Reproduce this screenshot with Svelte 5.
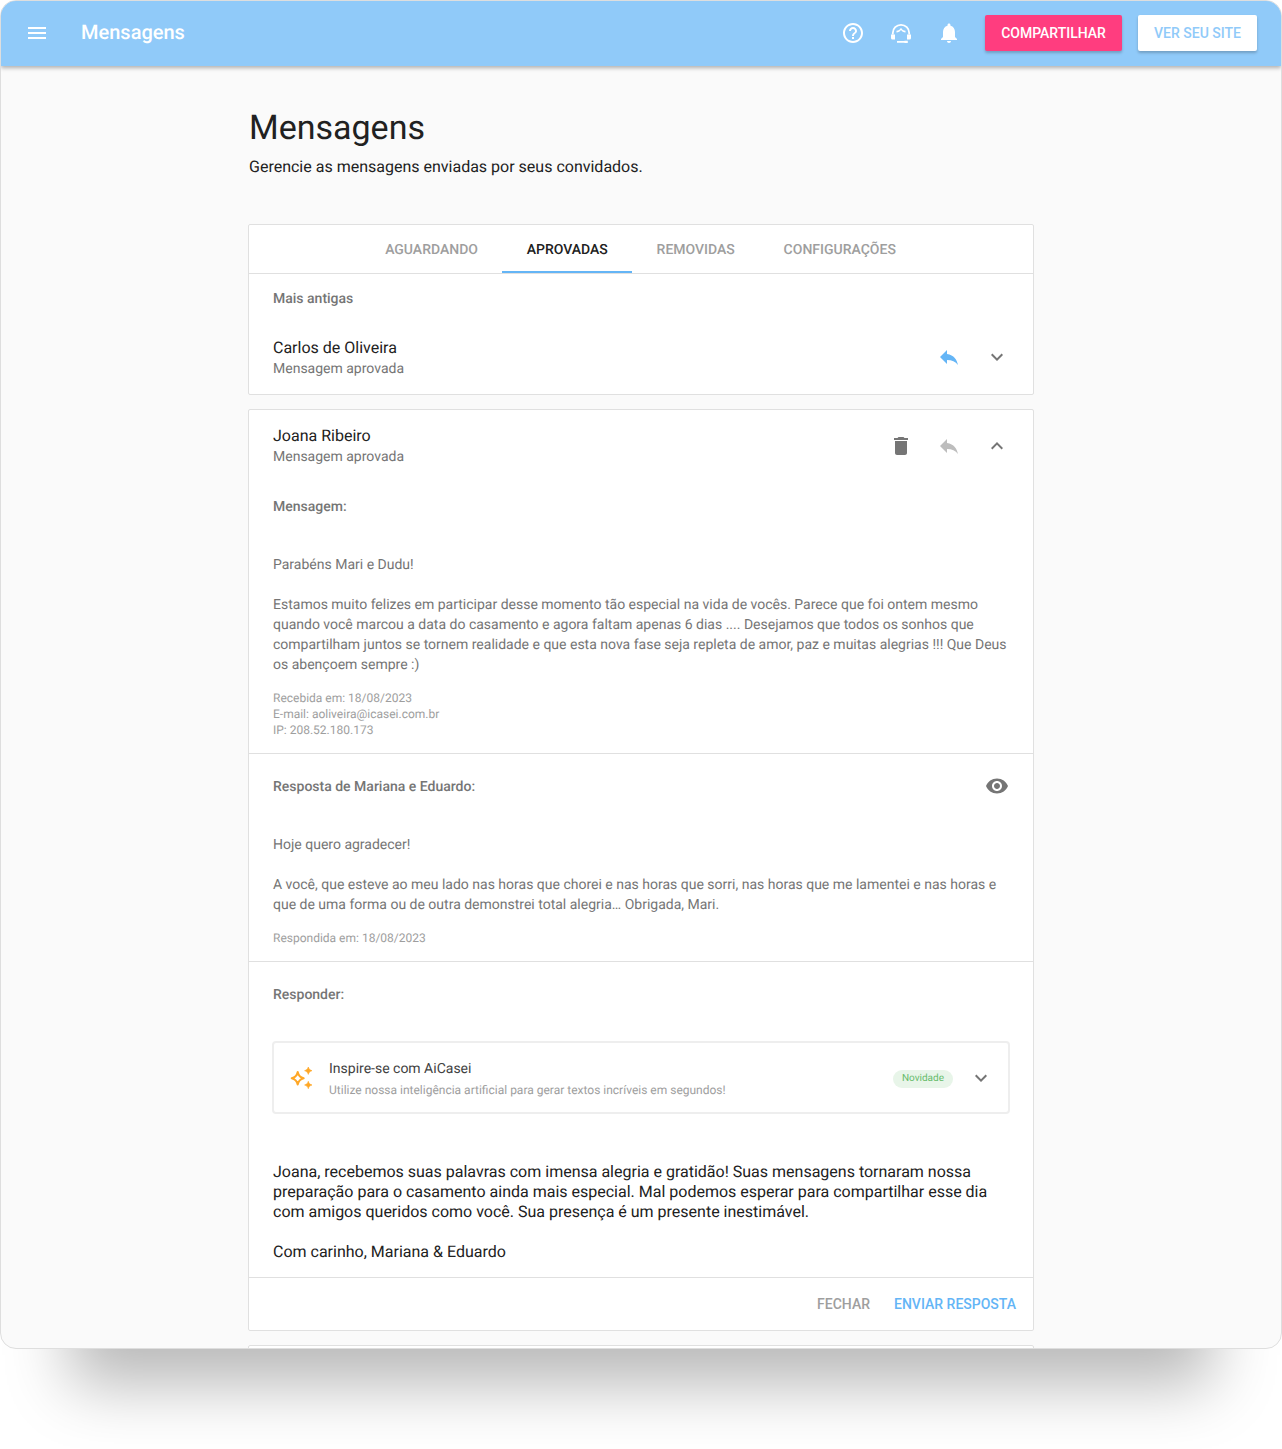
<script>
  const tabs = ['AGUARDANDO', 'APROVADAS', 'REMOVIDAS', 'CONFIGURAÇÕES'];
  const active = 'APROVADAS';
  const chevronDown = 'M7.41 8.59 12 13.17l4.59-4.58L18 10l-6 6-6-6z';
  const chevronUp = 'M7.41 15.41 12 10.83l4.59 4.58L18 14l-6-6-6 6z';
  const reply = 'M10 9V5l-7 7 7 7v-4.1c5 0 8.5 1.6 11 5.1-1-5-4-10-11-11z';
</script>

<div class="page">
  <div class="window">
    <header class="topbar">
      <svg class="menu" viewBox="0 0 24 24" width="24" height="24"><path d="M3 18h18v-2H3zm0-5h18v-2H3zm0-7v2h18V6z" fill="#fff" /></svg>
      <span class="topbar-title">Mensagens</span>
      <div class="topbar-actions">
        <svg viewBox="0 0 24 24" width="24" height="24"><path fill="#fff" d="M11 18h2v-2h-2zm1-16C6.48 2 2 6.48 2 12s4.48 10 10 10 10-4.48 10-10S17.52 2 12 2m0 18c-4.41 0-8-3.59-8-8s3.59-8 8-8 8 3.59 8 8-3.59 8-8 8m0-14c-2.21 0-4 1.79-4 4h2c0-1.1.9-2 2-2s2 .9 2 2c0 2-3 1.75-3 5h2c0-2.25 3-2.5 3-5 0-2.21-1.79-4-4-4" /></svg>
        <svg viewBox="0 0 24 24" width="24" height="24"><path fill="none" stroke="#fff" stroke-width="1.8" d="M3.800 13.500V12a8.200 8.200 0 0 1 16.400 0v1.500M8 20.900h9.500" /><path fill="#fff" d="M2 13.500h4v5H3.500A1.500 1.500 0 0 1 2 17zM18 13.500h4V17a1.500 1.500 0 0 1-1.500 1.500H18zM7.500 11.500c2 0 3.600-1 4.500-2.700.9 1.700 2.500 2.700 4.500 2.700v-1.700c-1.900 0-3.500-1.300-4.500-3.100-1 1.800-2.600 3.100-4.500 3.100z" /><path fill="#fff" d="M15.500 19.800h3.300v2.100h-3.300z" /></svg>
        <svg viewBox="0 0 24 24" width="24" height="24"><path fill="#fff" d="M12 22c1.100 0 2-.9 2-2h-4c0 1.100.9 2 2 2m6-6v-5c0-3.070-1.630-5.640-4.500-6.320V4c0-.83-.67-1.500-1.500-1.500s-1.500.67-1.500 1.500v.68C7.640 5.360 6 7.920 6 11v5l-2 2v1h16v-1z" /></svg>
      </div>
      <button class="btn-pink">COMPARTILHAR</button>
      <button class="btn-white">VER SEU SITE</button>
    </header>

    <main class="content">
      <h1>Mensagens</h1>
      <p class="lead">Gerencie as mensagens enviadas por seus convidados.</p>

      <section class="card first">
        <nav class="tabs">
          {#each tabs as tab}
            <span class="tab" class:active={tab === active}>{tab}</span>
          {/each}
        </nav>
        <div class="sort">Mais antigas</div>
        <div class="msg-head collapsed">
          <div class="who">
            <div class="name">Carlos de Oliveira</div>
            <div class="status">Mensagem aprovada</div>
          </div>
          <svg class="ico" viewBox="0 0 24 24"><path fill="#64b5f6" d={reply} /></svg>
          <svg class="ico" viewBox="0 0 24 24"><path fill="#757575" d={chevronDown} /></svg>
        </div>
      </section>

      <section class="card second">
        <div class="msg-head">
          <div class="who">
            <div class="name">Joana Ribeiro</div>
            <div class="status">Mensagem aprovada</div>
          </div>
          <svg class="ico" viewBox="0 0 24 24"><path fill="#757575" d="M6 19c0 1.100.9 2 2 2h8c1.100 0 2-.9 2-2V7H6zM19 4h-3.500l-1-1h-5l-1 1H5v2h14z" /></svg>
          <svg class="ico" viewBox="0 0 24 24"><path fill="#bdbdbd" d={reply} /></svg>
          <svg class="ico" viewBox="0 0 24 24"><path fill="#757575" d={chevronUp} /></svg>
        </div>

        <div class="block original">
          <div class="label">Mensagem:</div>
          <p class="body first-p">Parabéns Mari e Dudu!</p>
          <p class="body">Estamos muito felizes em participar desse momento tão especial na vida de vocês. Parece que foi ontem mesmo quando você marcou a data do casamento e agora faltam apenas 6 dias .... Desejamos que todos os sonhos que compartilham juntos se tornem realidade e que esta nova fase seja repleta de amor, paz e muitas alegrias !!! Que Deus os abençoem sempre :)</p>
          <div class="meta">
            <div>Recebida em: 18/08/2023</div>
            <div>E-mail: aoliveira@icasei.com.br</div>
            <div>IP: 208.52.180.173</div>
          </div>
        </div>

        <div class="block answer">
          <div class="label-row">
            <div class="label">Resposta de Mariana e Eduardo:</div>
            <svg class="ico" viewBox="0 0 24 24"><path fill="#757575" d="M12 4.500C7 4.500 2.730 7.610 1 12c1.730 4.390 6 7.500 11 7.500s9.270-3.110 11-7.500c-1.730-4.390-6-7.500-11-7.500M12 17c-2.760 0-5-2.240-5-5s2.240-5 5-5 5 2.240 5 5-2.240 5-5 5m0-8c-1.660 0-3 1.340-3 3s1.340 3 3 3 3-1.340 3-3-1.340-3-3-3" /></svg>
          </div>
          <p class="body first-p">Hoje quero agradecer!</p>
          <p class="body">A você, que esteve ao meu lado nas horas que chorei e nas horas que sorri, nas horas que me lamentei e nas horas e que de uma forma ou de outra demonstrei total alegria… Obrigada, Mari.</p>
          <div class="meta">Respondida em: 18/08/2023</div>
        </div>

        <div class="block compose">
          <div class="label">Responder:</div>
          <div class="inspire">
            <svg class="sparkle" viewBox="0 0 24 24" width="24" height="24">
              <path fill="none" stroke="#ffa726" stroke-width="2" stroke-linejoin="round" d="M8.700 6c.8 3.800 2.500 5.500 6 6.300-3.500.8-5.200 2.500-6 6.300-.8-3.800-2.500-5.500-6-6.300 3.500-.8 5.200-2.500 6-6.300z" />
              <path fill="#ffa726" d="M19.300 1c.6 2.100 1.500 3 3.700 3.700-2.200.7-3.100 1.600-3.700 3.700-.6-2.100-1.500-3-3.700-3.700 2.200-.7 3.100-1.600 3.700-3.700zM19.300 15.300c.6 2.100 1.500 3 3.700 3.700-2.200.7-3.100 1.600-3.700 3.700-.6-2.100-1.500-3-3.700-3.700 2.200-.7 3.100-1.600 3.700-3.700z" stroke="#ffa726" stroke-width="0.6" stroke-linejoin="round" />
            </svg>
            <div class="inspire-text">
              <div class="inspire-title">Inspire-se com AiCasei</div>
              <div class="inspire-sub">Utilize nossa inteligência artificial para gerar textos incríveis em segundos!</div>
            </div>
            <span class="badge">Novidade</span>
            <svg class="ico" viewBox="0 0 24 24"><path fill="#757575" d={chevronDown} /></svg>
          </div>
          <div class="reply-text">
            <p>Joana, recebemos suas palavras com imensa alegria e gratidão! Suas mensagens tornaram nossa preparação para o casamento ainda mais especial. Mal podemos esperar para compartilhar esse dia com amigos queridos como você. Sua presença é um presente inestimável.</p>
            <p>Com carinho, Mariana &amp; Eduardo</p>
          </div>
        </div>

        <footer class="actions">
          <button class="link muted">FECHAR</button>
          <button class="link blue">ENVIAR RESPOSTA</button>
        </footer>
      </section>

      <section class="card third"></section>
    </main>
  </div>
</div>

<style>
  :global(body) {
    margin: 0;
    background: #fff;
    font-family: Roboto, "Liberation Sans", sans-serif;
    text-rendering: geometricPrecision;
  }

  .page {
    height: 1449px;
    overflow: hidden;
  }

  .window {
    box-sizing: border-box;
    width: 1282px;
    height: 1349px;
    background: #fafafa;
    border: 1px solid #dedede;
    border-radius: 16px;
    overflow: hidden;
    box-shadow: 0 106px 60px -70px rgba(0, 0, 0, 0.28);
  }

  .topbar {
    display: flex;
    align-items: center;
    box-sizing: border-box;
    position: relative;
    height: 65px;
    padding: 0 24px 1px;
    background: #90caf9;
    box-shadow: 0 2px 4px rgba(0, 0, 0, 0.3);
  }

  .menu {
    flex: none;
  }

  .topbar-title {
    margin-left: 32px;
    padding-bottom: 2px;
    font-size: 20px;
    font-weight: 500;
    color: #fff;
  }

  .topbar-actions {
    display: flex;
    gap: 24px;
    margin-left: auto;
    margin-right: 24px;
  }

  button {
    font-family: inherit;
    border: 0;
    cursor: pointer;
  }

  .btn-pink,
  .btn-white {
    height: 36px;
    padding: 0;
    font-size: 14px;
    font-weight: 500;
    border-radius: 2px;
    box-shadow: 0 2px 3px rgba(0, 0, 0, 0.22);
  }

  .btn-pink {
    width: 137px;
    background: #ff3d7f;
    color: #fff;
  }

  .btn-white {
    width: 119px;
    margin-left: 16px;
    background: #fff;
    color: #90caf9;
  }

  .content {
    width: 786px;
    margin: 0 auto;
    padding-top: 40px;
  }

  h1 {
    margin: 0;
    padding-left: 1px;
    font-size: 34px;
    line-height: 44px;
    font-weight: 400;
    color: #212121;
  }

  .lead {
    margin: 5px 0 0;
    padding-left: 1px;
    font-size: 16px;
    line-height: 24px;
    color: #212121;
  }

  .card {
    box-sizing: border-box;
    background: #fff;
    border: 1px solid #e0e0e0;
    border-radius: 2px;
  }

  .first {
    margin-top: 45px;
    height: 171px;
  }

  .second {
    margin-top: 14px;
    height: 922px;
  }

  .third {
    margin-top: 14px;
    height: 40px;
  }

  .tabs {
    display: flex;
    justify-content: center;
    box-sizing: border-box;
    height: 49px;
    border-bottom: 1px solid #e0e0e0;
    padding-right: 1px;
  }

  .tab {
    display: flex;
    align-items: center;
    box-sizing: border-box;
    height: 48px;
    padding: 2px 24.4px 0;
    font-size: 14px;
    font-weight: 500;
    color: #9e9e9e;
  }

  .tab.active {
    color: #212121;
    border-bottom: 2px solid #64b5f6;
    padding-top: 4px;
  }

  .sort {
    padding: 15px 24px 0;
    font-size: 14px;
    line-height: 20px;
    font-weight: 500;
    color: #757575;
  }

  .msg-head {
    display: flex;
    align-items: center;
    gap: 24px;
    height: 40px;
    padding: 16px 24px 0;
  }

  .msg-head.collapsed {
    padding-top: 28px;
  }

  .collapsed .who {
    padding-top: 2px;
  }

  .who {
    flex: 1;
  }

  .name {
    margin-top: 1px;
    font-size: 16px;
    line-height: 20px;
    color: #212121;
  }

  .status {
    margin-top: 1px;
    font-size: 14px;
    line-height: 20px;
    color: #757575;
  }

  .ico {
    flex: none;
    width: 24px;
    height: 24px;
  }

  .block {
    box-sizing: border-box;
    padding: 0 24px;
    border-bottom: 1px solid #e0e0e0;
  }

  .original {
    height: 288px;
    padding-top: 31px;
  }

  .answer {
    height: 208px;
    padding-top: 22px;
  }

  .compose {
    height: 316px;
    padding-top: 23px;
  }

  .label {
    font-size: 14px;
    line-height: 20px;
    font-weight: 500;
    color: #757575;
  }

  .label-row {
    display: flex;
    align-items: flex-start;
    justify-content: space-between;
    height: 20px;
  }

  .label-row .label {
    margin-top: 1px;
  }

  .label-row .ico {
    margin-top: -2px;
  }

  .body {
    margin: 0 0 20px;
    font-size: 14px;
    line-height: 20px;
    color: #757575;
  }

  .body.first-p {
    margin-top: 38px;
  }

  .answer .body.first-p {
    margin-top: 39px;
  }

  .meta {
    margin-top: -5px;
    font-size: 12px;
    line-height: 16px;
    color: #9e9e9e;
  }

  .inspire {
    display: flex;
    align-items: center;
    box-sizing: border-box;
    height: 73px;
    margin: 36px -1px 0;
    padding: 0 15px;
    border: 2px solid #eee;
    border-radius: 4px;
  }

  .sparkle {
    flex: none;
    margin-right: 16px;
  }

  .inspire-text {
    flex: 1;
    padding-top: 2px;
  }

  .inspire-title {
    font-size: 14px;
    line-height: 20px;
    color: #424242;
  }

  .inspire-sub {
    margin-top: 3px;
    font-size: 12px;
    line-height: 16px;
    color: #9e9e9e;
  }

  .badge {
    height: 18px;
    margin: 2px 16px 0 0;
    padding: 0 9px;
    line-height: 18px;
    border-radius: 9px;
    font-size: 10px;
    color: #66bb6a;
    background: #e8f5e9;
  }

  .reply-text {
    margin-top: 48px;
    font-size: 16px;
    line-height: 20px;
    color: #212121;
  }

  .reply-text p {
    margin: 0 0 20px;
  }

  .actions {
    display: flex;
    justify-content: flex-end;
    align-items: center;
    gap: 24px;
    height: 52px;
    padding-right: 17px;
  }

  .link {
    padding: 0;
    background: none;
    font-size: 14px;
    font-weight: 500;
  }

  .muted {
    color: #9e9e9e;
  }

  .blue {
    color: #64b5f6;
  }
</style>
